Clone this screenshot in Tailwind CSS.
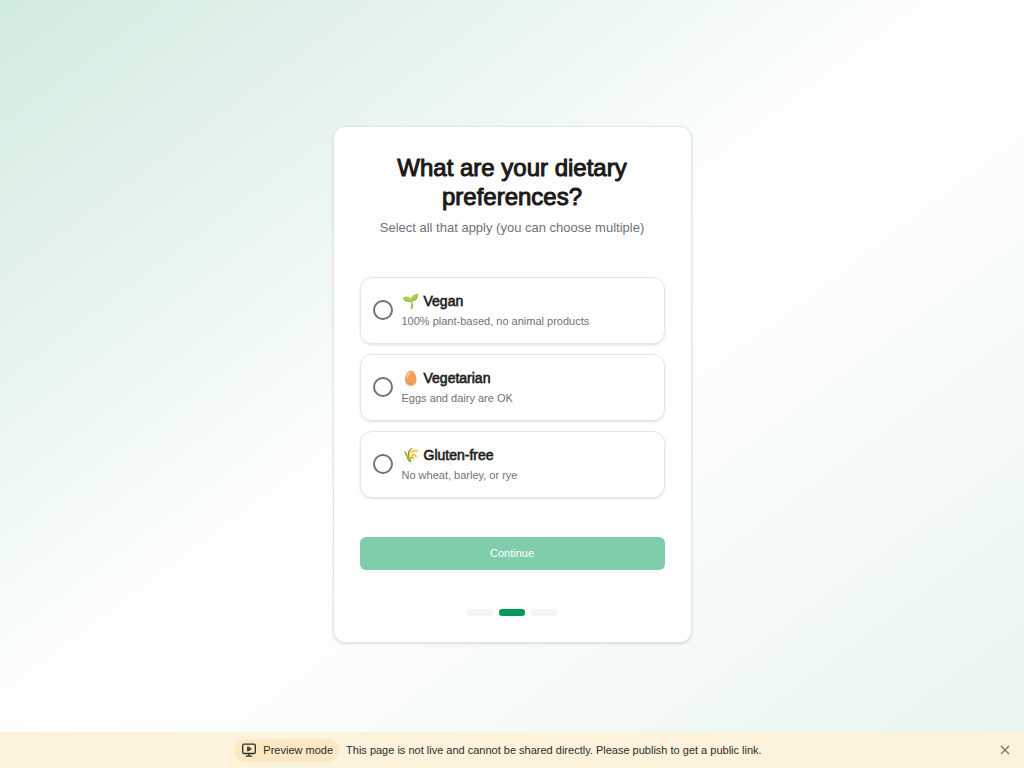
<!DOCTYPE html>
<html lang="en">
<head>
<meta charset="utf-8">
<meta name="viewport" content="width=device-width, initial-scale=1">
<title>Dietary preferences</title>
<script src="https://cdn.jsdelivr.net/npm/@tailwindcss/browser@4"></script>
</head>
<body class="font-['Liberation_Sans',Arial,sans-serif] text-[#1c1917]">
<main class="flex min-h-screen items-center justify-center bg-linear-to-br from-[#d1ebde] via-white to-[#e8f4ee] p-4">
  <section class="flex w-full max-w-[359px] flex-col rounded-xl border border-[#e5e5e5] bg-white p-[26px] shadow-sm">
    <header class="text-center">
      <h1 class="text-2xl leading-[29px] [-webkit-text-stroke:1px_#1c1917]">What are your dietary preferences?</h1>
      <p class="mt-[7px] text-[13px] leading-5 text-[#71717a]">Select all that apply (you can choose multiple)</p>
    </header>
    <form class="mt-[39px] flex flex-col">
      <div class="flex flex-col gap-2.5">
        <label class="flex items-center gap-[9px] rounded-xl border border-[#e5e5e5] px-3 py-3 shadow-sm">
          <input type="checkbox" name="diet" value="vegan" class="size-5 shrink-0 appearance-none rounded-full border-2 border-[#71717a] checked:bg-[#009e5c]">
          <span class="flex flex-col pt-px">
            <span class="flex gap-[5px] text-sm leading-5"><span>🌱</span><span class="[-webkit-text-stroke:1px_#1c1917a0]">Vegan</span></span>
            <span class="text-[11px] leading-5 text-[#71717a]">100% plant-based, no animal products</span>
          </span>
        </label>
        <label class="flex items-center gap-[9px] rounded-xl border border-[#e5e5e5] px-3 py-3 shadow-sm">
          <input type="checkbox" name="diet" value="vegetarian" class="size-5 shrink-0 appearance-none rounded-full border-2 border-[#71717a] checked:bg-[#009e5c]">
          <span class="flex flex-col pt-px">
            <span class="flex gap-[5px] text-sm leading-5"><span>🥚</span><span class="[-webkit-text-stroke:1px_#1c1917a0]">Vegetarian</span></span>
            <span class="text-[11px] leading-5 text-[#71717a]">Eggs and dairy are OK</span>
          </span>
        </label>
        <label class="flex items-center gap-[9px] rounded-xl border border-[#e5e5e5] px-3 py-3 shadow-sm">
          <input type="checkbox" name="diet" value="gluten-free" class="size-5 shrink-0 appearance-none rounded-full border-2 border-[#71717a] checked:bg-[#009e5c]">
          <span class="flex flex-col pt-px">
            <span class="flex gap-[5px] text-sm leading-5"><span>🌾</span><span class="[-webkit-text-stroke:1px_#1c1917a0]">Gluten-free</span></span>
            <span class="text-[11px] leading-5 text-[#71717a]">No wheat, barley, or rye</span>
          </span>
        </label>
      </div>
      <button type="submit" disabled class="mt-[39px] h-[33px] rounded-md bg-[#80cdac] text-[11px] text-white">Continue</button>
    </form>
    <div class="mt-[39px] flex justify-center gap-1.5" aria-label="Step 2 of 3">
      <span class="h-[7px] w-[26px] rounded-[3px] bg-[#f4f4f5]"></span>
      <span class="h-[7px] w-[26px] rounded-[3px] bg-[#009b5a]"></span>
      <span class="h-[7px] w-[26px] rounded-[3px] bg-[#f4f4f5]"></span>
    </div>
  </section>
</main>
<aside class="fixed inset-x-0 bottom-0 flex h-9 items-center bg-[#fdf3dd] text-[11px] text-[#2c2c28]">
  <div class="flex flex-1 items-center justify-center gap-[7px]">
    <span class="flex h-[23px] items-center gap-1.5 rounded-full bg-[#fce8c3] px-1.5">
      <svg class="size-4" viewBox="0 0 16 16" fill="none" stroke="currentColor" stroke-width="1.3" stroke-linecap="round" stroke-linejoin="round" aria-hidden="true"><rect x="1.7" y="2.2" width="12.6" height="9.3" rx="1.3"/><path d="M8 11.5v2.7M5.3 14.2h5.4M6.8 5v3.8l3-1.9z"/></svg>
      Preview mode
    </span>
    <p>This page is not live and cannot be shared directly. Please publish to get a public link.</p>
  </div>
  <button type="button" aria-label="Close" class="mr-[11px] flex size-4 items-center justify-center text-[#777469]">
    <svg class="size-3" viewBox="0 0 12 12" fill="none" stroke="currentColor" stroke-width="1.3" aria-hidden="true"><path d="M2 2l8 8M10 2l-8 8"/></svg>
  </button>
</aside>
</body>
</html>
